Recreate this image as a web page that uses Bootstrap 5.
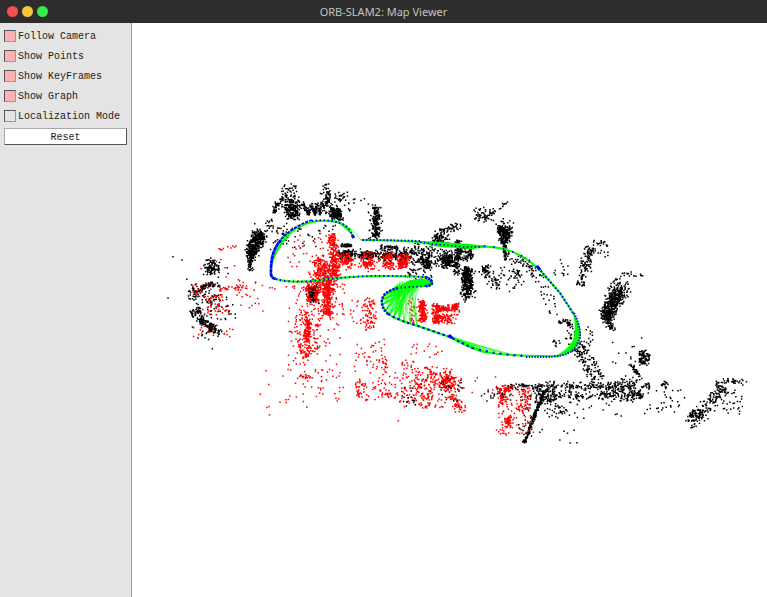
<!DOCTYPE html>
<html lang="en">
<head>
<meta charset="utf-8">
<meta name="viewport" content="width=device-width, initial-scale=1">
<title>ORB-SLAM2: Map Viewer</title>
<link href="https://cdn.jsdelivr.net/npm/bootstrap@5.3.0/dist/css/bootstrap.min.css" rel="stylesheet">
<style>
  .titlebar { background: #2d2d2d; height: 23px; color: #c4c4c4; font: 11px/23px "Noto Sans", sans-serif; display: grid; grid-template-columns: 1fr auto 1fr; }
  .win-btn { width: 11px; height: 11px; border: 0; padding: 0; border-radius: 50%; }
  .win-close { background: #f25056; }
  .win-min { background: #fac536; }
  .win-max { background: #39ea49; }
  .win-controls { padding-left: 7px; gap: 4px; }
  .viewer { min-height: 0; }
  .panel { width: 132px; background: #e4e4e4; border-right: 1px solid #9c9c9c; padding: 4px 4px 0; font: 10px/20px "Liberation Mono", monospace; color: #1c1c1c; }
  .option { height: 20px; gap: 2px; white-space: nowrap; }
  .option input { appearance: none; width: 12px; height: 12px; margin: 0 0 2px; flex: none; border: 1px solid; border-color: #555 #999 #999 #555; background: #e4e4e4; }
  .option input:checked { background: #ffb0b0; }
  .reset-btn { height: 17px; padding: 0; border: 1px solid; border-color: #aaa #555 #555 #aaa; background: #fff; color: inherit; font: inherit; line-height: 17px; margin-top: 1px; }
  .map-view { min-width: 0; }
  .map-view svg { width: 100%; height: 100%; display: block; }
</style>
<script src="https://cdn.jsdelivr.net/npm/bootstrap@5.3.0/dist/js/bootstrap.bundle.min.js"></script>
</head>
<body class="vh-100 d-flex flex-column overflow-hidden bg-white">
<header class="titlebar flex-shrink-0">
  <div class="win-controls d-flex align-items-center">
    <button class="win-btn win-close" type="button" aria-label="Close"></button>
    <button class="win-btn win-min" type="button" aria-label="Minimize"></button>
    <button class="win-btn win-max" type="button" aria-label="Maximize"></button>
  </div>
  <div>ORB-SLAM2: Map Viewer</div>
</header>
<main class="viewer d-flex flex-grow-1">
  <form class="panel d-flex flex-column flex-shrink-0">
    <label class="option d-flex align-items-center" for="follow"><input type="checkbox" id="follow" checked>Follow Camera</label>
    <label class="option d-flex align-items-center" for="points"><input type="checkbox" id="points" checked>Show Points</label>
    <label class="option d-flex align-items-center" for="keyframes"><input type="checkbox" id="keyframes" checked>Show KeyFrames</label>
    <label class="option d-flex align-items-center" for="graph"><input type="checkbox" id="graph" checked>Show Graph</label>
    <label class="option d-flex align-items-center" for="local"><input type="checkbox" id="local">Localization Mode</label>
    <button class="reset-btn" type="button">Reset</button>
  </form>
  <section class="map-view flex-grow-1">
    <svg viewBox="132 23 635 574" preserveAspectRatio="xMidYMid meet" role="img" aria-label="Point cloud with camera trajectory">
      <path id="cloud" stroke="#000" stroke-width="1.5" fill="none"/>
      <path id="active" stroke="#f00" stroke-width="1.5" fill="none"/>
      <path id="mixed" stroke="#000" stroke-width="1.5" fill="none"/>
      <path id="links" stroke="#0f0" stroke-width="0.7" stroke-opacity="0.7" fill="none"/>
      <g fill="#0f0">
        <path d="M271 266C273 252 282 235 301 225C285 238 277 249 272 266Z"/>
        <path d="M334 220C344 222 349 228 353 236C345 229 341 224 334 220Z"/>
        <path d="M400 240L440 242L470 244L496 247L470 249L442 247Z"/>
        <path d="M574 314Q581 330 577 341Q571 355 555 357Q568 350 573 341Q577 332 574 314Z" stroke="#0f0"/>
        <path d="M410 280L428 278L432 283L428 286L400 288L387 293L399 286Z"/>
        <path d="M450 336L480 349L496 354L476 350Z"/>
      </g>
      <g fill="none" stroke-linejoin="round">
        <path stroke="#0f0" stroke-width="2" d="M353 237C350 228 344 222 330 221C310 219 292 228 281 240C272 250 271 261 271 271Q270 278 276 279Q290 283 312 281Q350 276 380 276Q405 276 425 277Q432 279 432 283Q431 286 426 286C400 287 384 290 382 300Q381 310 393 317Q404 322 415 325L450 337Q472 349 484 352Q510 356 545 356Q563 357 571 351Q580 343 580 333Q579 323 573 313L560 293L540 270Q524 255 505 249Q490 246 470 246Q440 244 420 242Q390 240 361 240"/>
        <path stroke="#00f" stroke-width="2" stroke-dasharray="1.5 2.4" d="M353 237C350 228 344 222 330 221C325 220 318 220 312 221"/>
        <path stroke="#00f" stroke-width="1.8" stroke-dasharray="3 1.2" d="M312 220C300 224 290 230 281 239"/>
        <path stroke="#00f" stroke-width="2.7" stroke-dasharray="4 .4" d="M281 240C272 250 271 261 271 271Q270 278 276 279"/>
        <path stroke="#00f" stroke-width="2" stroke-dasharray="1.3 3" d="M276 279Q290 283 312 281Q350 276 380 276Q405 276 425 277"/>
        <path stroke="#00f" stroke-width="2.8" stroke-dasharray="2.3 .8" d="M425 277Q432 279 432 283Q431 286 426 286"/>
        <path stroke="#00f" stroke-width="2" stroke-dasharray="1.4 2.6" d="M426 286C415 287 405 287 398 288"/>
        <path stroke="#00f" stroke-width="2.5" stroke-dasharray="2.2 1.3" d="M398 288C386 291 383 295 382 300Q381 308 388 314"/>
        <path stroke="#00f" stroke-width="2.1" stroke-dasharray="2.3 3" d="M388 314Q400 321 415 325L450 337L472 348"/>
        <path stroke="#00f" stroke-width="2.2" stroke-dasharray="2 5" d="M472 348Q500 355 526 356"/>
        <path stroke="#00f" stroke-width="2.1" stroke-dasharray="1.3 1.5" d="M526 357H545Q563 357 572 351Q580 343 580 333Q579 323 574 313"/>
        <path stroke="#00f" stroke-width="2" stroke-dasharray="1.5 2.2" d="M573 313L560 293L540 270L536 266"/>
        <path stroke="#00f" stroke-width="2" stroke-dasharray="1.5 8" d="M530 261Q520 254 505 249Q490 246 480 246"/>
        <path stroke="#00f" stroke-width="1.7" stroke-dasharray="1.5 2.4" d="M480 247L465 247Q440 245 420 242"/>
        <path stroke="#00f" stroke-width="1.9" stroke-dasharray="1.5 2" d="M420 241Q390 240 361 240"/>
        <path stroke="#0f0" stroke-width=".7" d="M349 227L361 240"/>
        <path stroke="#00f" stroke-width="3" d="M449 335L452 338M537 266L540 270M352 235L354 238"/>
      </g>
    </svg>
  </section>
</main>
<script>
// Deterministic generator so the cloud is the same on every load.
let seed = 20177;
const rnd = () => (seed = (seed * 1664525 + 1013904223) % 4294967296) / 4294967296;
const fmt = v => v.toFixed(1);
const soft = () => (rnd() + rnd() + rnd() - 1.5) * 3;
// Area: "count x,y x,y x,y ..." (two corners make a rectangle)
// Band: "~count width x,y x,y ..."
function sample(spec) {
  const band = spec[0] === '~';
  const parts = spec.replace('~', '').split(' ');
  const n = +parts.shift(), w = band ? +parts.shift() : 0;
  let p = parts.map(s => s.split(',').map(Number));
  let out = '';
  const dot = (x, y) => { out += `M${fmt(x - .75)} ${fmt(y)}h1.5`; };
  if (band) {
    const len = p.slice(1).map((q, i) => Math.hypot(q[0] - p[i][0], q[1] - p[i][1]));
    const total = len.reduce((a, b) => a + b, 0);
    for (let k = 0; k < n; k++) {
      let t = rnd() * total, i = 0;
      while (i < len.length - 1 && t > len[i]) t -= len[i++];
      const dx = (p[i + 1][0] - p[i][0]) / len[i], dy = (p[i + 1][1] - p[i][1]) / len[i];
      const o = (rnd() + rnd() - 1) * w * .9;
      dot(p[i][0] + dx * t - dy * o, p[i][1] + dy * t + dx * o);
    }
    return out;
  }
  if (p.length === 2) { const [a, b] = p; p = [a, [b[0], a[1]], b, [a[0], b[1]]]; }
  const xs = p.map(q => q[0]), ys = p.map(q => q[1]);
  const x0 = Math.min(...xs), x1 = Math.max(...xs), y0 = Math.min(...ys), y1 = Math.max(...ys);
  for (let k = 0; k < n;) {
    const x = x0 + rnd() * (x1 - x0), y = y0 + rnd() * (y1 - y0);
    let inside = false;
    for (let i = 0, j = p.length - 1; i < p.length; j = i++)
      if ((p[i][1] > y) !== (p[j][1] > y) && x < (p[j][0] - p[i][0]) * (y - p[i][1]) / (p[j][1] - p[i][1]) + p[i][0]) inside = !inside;
    if (inside) { dot(x + soft() * .8, y + soft() * .8); k++; }
  }
  return out;
}
const cloud = `50 281,186 297,200
~28 2 280,200 298,202
150 286,205 298,206 298,218 287,218
~36 4 278,203 272,214
14 266,218 272,228
330 256,230 264,233 263,242 255,253 251,269 249,266 247,250
85 256,226 267,230 265,246 252,260 246,250 247,242
~14 3 250,264 250,271
32 269,224 288,250
35 284,226 340,248
~150 2 304,203 308,215 311,203 315,215 317,203 320,215 322,203 326,214
190 330,208 341,209 341,219 331,218
~50 4 326,184 328,206
50 322,192 347,207
~45 6 280,203 304,205
~150 5 376,207 376,239
~30 9 376,215 376,235
20 365,204 384,240
12 345,198 372,212
~45 2 341,245 352,246
~45 3 380,247 398,248
60 338,250 357,258
50 358,251 377,257
70 378,251 410,258
~80 16 402,252 432,256
80 412,248 432,264
90 422,258 430,267
120 434,250 457,267
110 443,256 452,266
~110 4 458,240 456,275
110 457,247 472,260
60 432,233 443,245
~25 11 436,240 450,236
~45 5 440,231 450,228 461,226
60 474,210 495,220
14 480,205 509,225
~7 3 502,205 508,203
220 499,227 510,228 509,237 505,246 503,246 500,239
45 497,220 513,243
~30 2 505,245 505,260
310 463,268 471,269 472,290 467,299 465,298 464,285
45 460,266 475,302
~75 9 479,267 488,273 499,287
25 500,262 525,290
~35 7 406,274 432,276
~55 6 507,256 526,262 538,280
25 512,271 520,278
~24 10 536,278 558,315
~130 8 591,247 580,286
~18 6 592,244 609,244
8 596,251 609,256
12 553,260 569,276
350 616,286 624,288 620,301 609,324 601,318 605,306
150 615,276 632,285 624,303 608,330 599,318 604,300
~18 3 620,274 643,275
~22 4 608,322 614,331
~35 3 558,322 568,321 572,329
34 567,330 577,350
~11 3 556,347 554,340 560,343
~60 4 576,335 603,378
~75 6 574,345 595,382
15 585,326 593,350
~65 9 639,358 650,358
~28 4 643,350 643,364
~35 3 632,365 640,377
18 610,340 650,374
~60 4 508,387 545,386
~150 6 545,386 636,386
90 535,388 555,402
~85 6 557,395 642,393
70 555,386 642,402
~230 2 544,391 524,443
~60 14 545,389 560,415
45 600,383 625,399
25 520,395 532,436
16 482,387 501,399
22 555,402 622,418
7 530,428 575,445
50 620,378 640,402
~24 5 642,385 650,387
~22 5 636,395 643,396
~20 5 662,386 668,383
30 645,390 685,415
~115 11 688,425 704,411 718,395
50 691,411 703,420
~38 4 715,382 743,382
50 715,385 727,396
25 725,390 742,413
~85 10 206,270 216,263
22 202,259 220,278
50 189,286 203,299
~28 4 201,288 213,284
~20 3 206,284 220,285
~40 6 191,314 201,310
~110 5 198,318 206,323 214,329 221,333
~20 3 212,324 209,331
45 195,297 236,320
13 192,328 220,339
~22 6 208,303 218,294
5 180,255 245,278
12 410,375 465,408
1 166,297 168,299
1 173,258 175,260
1 210,348 212,350
1 576,444 578,446
1 745,381 747,383`.split('\n');
const active = `25 192,283 216,300
20 209,295 222,306
~35 4 219,289 246,288
12 235,280 256,300
20 201,307 228,315
22 193,325 233,338
~10 3 218,249 239,247
7 200,260 258,280
~230 7 331,234 335,257 335,276
150 315,264 334,279
140 306,279 336,292
170 308,287 317,302
~260 6 327,276 328,315
45 290,235 340,275
130 295,281 345,320
~110 4 309,320 306,342
85 297,310 320,358
85 285,320 340,402
35 299,345 312,358
~16 4 299,376 311,378
~32 5 314,264 326,257
105 342,252 352,264
105 363,253 373,267
100 383,254 393,267
120 398,255 408,268
75 340,252 405,270
55 365,300 374,329
35 350,298 378,324
75 355,340 387,402
18 382,356 387,373
22 355,382 364,396
22 382,388 391,398
32 389,362 411,403
~70 12 404,369 450,378
60 411,371 450,391
85 440,376 454,388
125 402,378 463,408
~40 8 450,393 463,412
25 422,394 432,408
15 410,344 445,359
155 420,301 425,321
65 433,303 438,324
80 437,307 450,310
60 451,304 458,310
95 434,315 452,323
28 409,298 416,323
15 445,302 460,324
18 235,280 300,310
28 260,370 345,414
50 496,387 512,391
35 499,393 506,406
55 506,417 511,425
95 498,390 533,436
40 518,388 530,412
6 470,376 500,400
1 350,405 440,420`.split('\n');
const mixed = `40 308,287 317,302
30 338,251 356,258
25 359,252 377,258
30 379,253 410,260
20 440,377 463,405
15 402,385 415,408
14 190,286 212,300
14 498,388 530,400
22 266,400 268,250 340,250 340,400`.split('\n').slice(0, 8);
for (const [id, specs] of Object.entries({ cloud, active, mixed }))
  document.getElementById(id).setAttribute('d', specs.map(sample).join(''));

// Covisibility links fan out from the bend and along the lower stretch.
const rim = [[390, 291], [384, 295], [382, 300], [382, 305], [385, 311], [389, 315], [394, 317], [399, 319], [404, 321], [410, 323], [417, 325]];
let links = '';
for (const [x, y] of rim)
  for (let k = 0; k < (x < 400 ? 11 : 4); k++) links += `M${x} ${y}L${fmt(397 + rnd() * 22)} ${fmt(289 - rnd() * 8)}`;
for (let k = 0; k < 9; k++) links += `M450 ${336 + k % 3}L${472 + k * 5} ${fmt(348 + k * .8)}`;
document.getElementById('links').setAttribute('d', links);
</script>
</body>
</html>
